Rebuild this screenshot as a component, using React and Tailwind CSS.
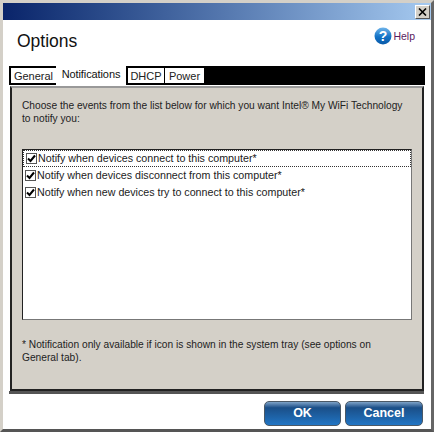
import React from 'react';

const tabClass = "h-[19px] border-t-2 border-b-2 border-black bg-white flex items-center justify-center text-[11px] text-[#222]";

const rows = [
  'Notify when devices connect to this computer*',
  'Notify when devices disconnect from this computer*',
  'Notify when new devices try to connect to this computer*',
];

const CheckBox = () => (
  <span className="w-[11px] h-[11px] shrink-0 border border-[#555] bg-white flex items-center justify-center">
    <svg width="9" height="9" viewBox="0 0 9 9">
      <path d="M1 4.5 L3.5 7 L8 1.5" fill="none" stroke="#000" strokeWidth="2" />
    </svg>
  </span>
);

const DialogButton = ({ label, width }) => (
  <button className={`${width} h-[25px] rounded-[5px] border border-[#4a5866] bg-gradient-to-b from-[#7ea3c8] from-0% via-[#1a4f88] via-25% to-[#2175c4] to-100% text-white text-[12.5px] font-bold`}>
    {label}
  </button>
);

export default function App() {
  return (
    <div className="w-[434px] h-[432px] bg-white overflow-hidden flex flex-col border-[3px] border-[#d4d0c8] border-r-[#666] border-b-[#555] font-['Liberation_Sans',sans-serif]">
      {/* title bar */}
      <div className="h-[17px] shrink-0 flex items-center justify-end pr-[1px] bg-gradient-to-r from-[#0a246a] to-[#a6caf0]">
        <div className="w-[15px] h-[14px] bg-[#d4d0c8] border border-[#555] border-t-white border-l-white flex items-center justify-center">
          <svg width="9" height="8" viewBox="0 0 9 8">
            <path d="M1 0.5 L8 7.5 M8 0.5 L1 7.5" stroke="#000" strokeWidth="1.6" />
          </svg>
        </div>
      </div>

      <div className="h-[46px] shrink-0 flex justify-between pl-[14px] pr-[16px]">
        <div className="text-[17.5px] text-[#111] mt-[9px] leading-[24px]">Options</div>
        <div className="flex items-center gap-[1px] mt-[7px] h-[18px]">
          <svg width="18" height="18" viewBox="0 0 18 18">
            <defs>
              <linearGradient id="help" x1="0" y1="0" x2="0" y2="1">
                <stop offset="0" stopColor="#6fb4ea" />
                <stop offset="0.55" stopColor="#1272c6" />
                <stop offset="1" stopColor="#0a5aa8" />
              </linearGradient>
            </defs>
            <circle cx="9" cy="9" r="8.5" fill="url(#help)" />
            <text x="9" y="14" textAnchor="middle" fontSize="14" fontWeight="bold" fill="#fff" fontFamily="Liberation Sans">?</text>
          </svg>
          <span className="text-[10.5px] text-[#5a1a5e] mt-[2px]">Help</span>
        </div>
      </div>

      {/* tabs */}
      <div className="ml-[6px] mr-[6px] h-[19px] shrink-0 flex bg-black">
        <div className={`${tabClass} w-[47px] border-l-2 pt-[1px]`}>General</div>
        <div className="w-[70px] h-[19px] bg-white flex items-center justify-center text-[11px] tracking-[-0.1px] text-[#111] pb-[3px]">Notifications</div>
        <div className={`${tabClass} w-[39px] border-l-2 border-r pt-[1px]`}>DHCP</div>
        <div className={`${tabClass} w-[40px] border-r pt-[1px]`}>Power</div>
      </div>

      {/* tab panel */}
      <div className="ml-[6px] mr-[7px] h-[309px] shrink-0 pt-[1px] border-b-[3px] border-b-[#555] bg-white">
        <div className="h-full border-2 border-[#222] border-t-[#999] ml-[1px] bg-[#d4d0c8] flex flex-col px-[10px] text-[#222]">
          <p className="mt-[11px] leading-[13px] text-[10.2px]">
            Choose the events from the list below for which you want Intel® My WiFi Technology<br />to notify you:
          </p>
          <div className="mt-[24px] h-[171px] bg-white border border-[#222] border-b-[#777] border-r-[#777] flex flex-col">
            {rows.map((row, i) => (
              <div key={row} className={`h-[17px] flex items-center gap-[1px] pl-[2px] ${i === 0 ? 'border border-dotted border-[#333] pl-[1px]' : ''}`}>
                <CheckBox />
                <span className="text-[10.7px] whitespace-nowrap">{row}</span>
              </div>
            ))}
          </div>
          <p className="mt-[18px] leading-[13px] text-[10.2px]">
            * Notification only available if icon is shown in the system tray (see options on<br />General tab).
          </p>
        </div>
      </div>

      {/* footer buttons */}
      <div className="flex justify-end gap-[4px] pt-[7px] pr-[8px]">
        <DialogButton label="OK" width="w-[77px]" />
        <DialogButton label="Cancel" width="w-[78px]" />
      </div>
    </div>
  );
}
